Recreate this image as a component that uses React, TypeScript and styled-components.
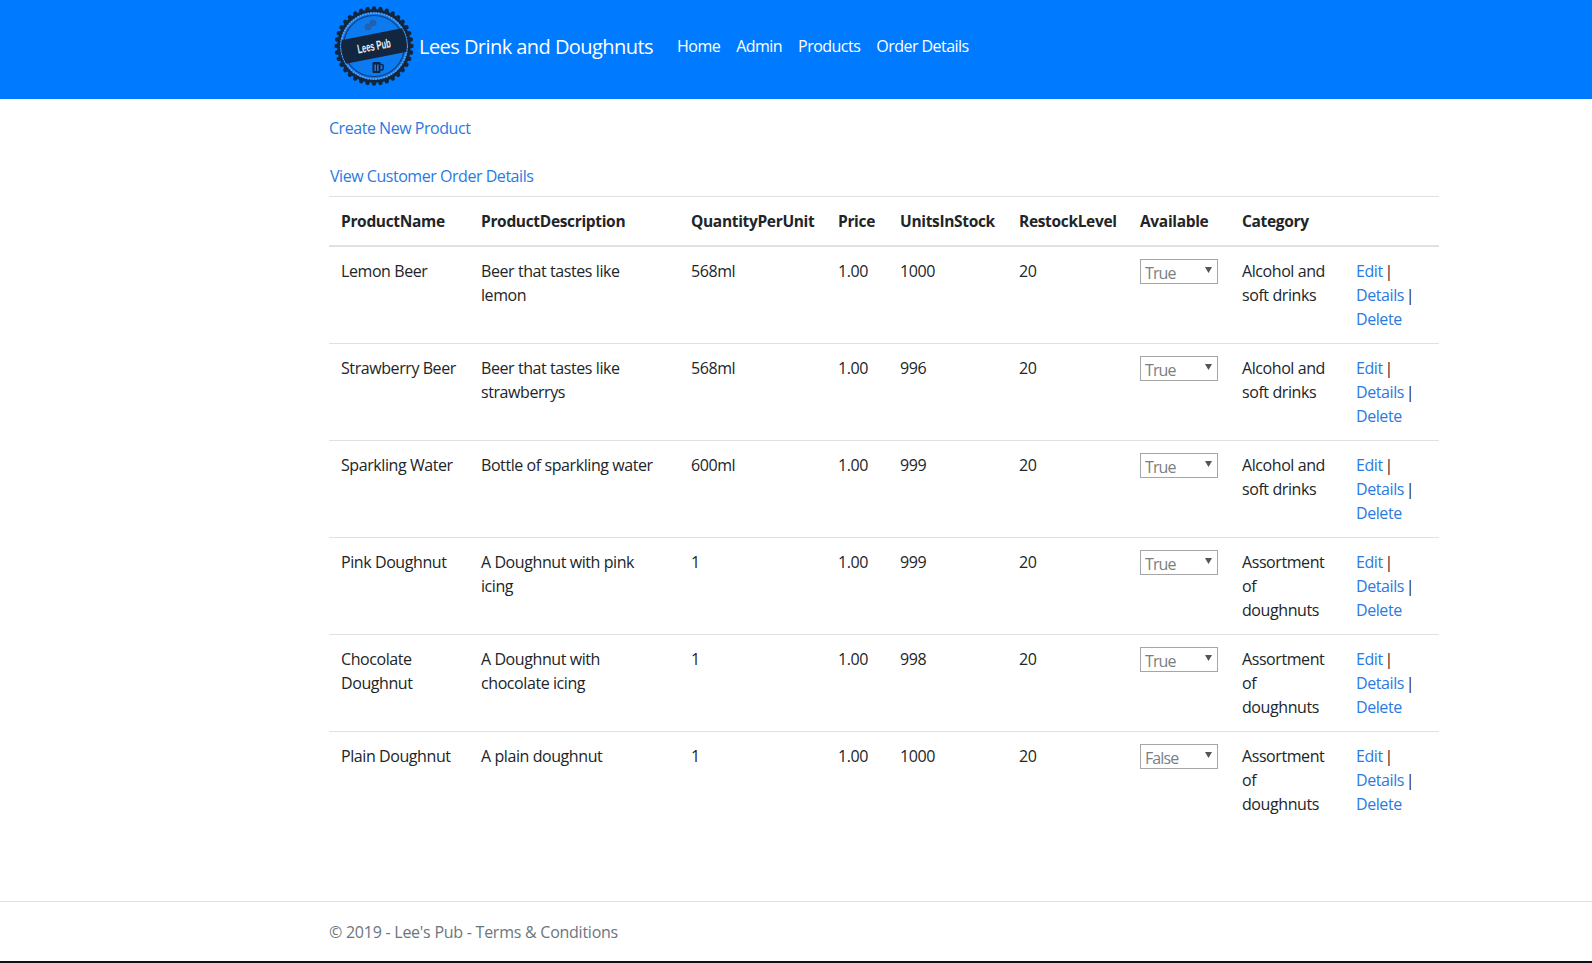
import React from "react";
import styled, { createGlobalStyle } from "styled-components";

const Global = createGlobalStyle`
  html, body { margin: 0; padding: 0; background: #fff; }
  body { font-family: "Open Sans", "Noto Sans", "Liberation Sans", sans-serif; font-size: 16px; line-height: 24px; color: #212529; }
  * { box-sizing: border-box; }
`;

const Page = styled.div`
  height: 963px;
  display: flex;
  flex-direction: column;
  border-bottom: 2px solid #111;
`;
const NavBar = styled.nav`
  height: 99px;
  flex: none;
  background: #007bff;
  padding-left: 333px;
  display: flex;
  align-items: flex-start;
`;
const Logo = styled.svg`
  width: 82px;
  height: 84px;
  margin-top: 4px;
  flex: none;
`;
const Brand = styled.a`
  color: #fff;
  font-size: 20px;
  line-height: 30px;
  margin: 32px 0 0 4px;
  letter-spacing: -0.55px;
`;
const NavLinks = styled.div`
  display: flex;
  gap: 16px;
  margin: 34px 0 0 24px;
`;
const NavLink = styled.a`
  color: #fff;
  font-size: 16px;
  line-height: 24px;
  letter-spacing: -0.53px;
`;
const Main = styled.main`
  flex: 1;
  padding: 0 152px 0 329px;
`;
const ActionLink = styled.a<{ $top: number; $left?: number }>`
  display: block;
  color: #2a7ae2;
  margin-top: ${(p) => p.$top}px;
  margin-left: ${(p) => p.$left ?? 0}px;
  letter-spacing: -0.46px;
`;
const Table = styled.table`
  width: 1110px;
  margin-top: 8px;
  border-collapse: collapse;
  table-layout: fixed;
`;
const Th = styled.th`
  text-align: left;
  font-weight: 700;
  padding: 12px;
  height: 49px;
  border-top: 1px solid #dee2e6;
  border-bottom: 2px solid #dee2e6;
  white-space: nowrap;
  letter-spacing: -0.33px;
  font-size: 15.5px;
`;
const Td = styled.td`
  vertical-align: top;
  padding: 12px;
  height: 97px;
  border-top: 1px solid #dee2e6;
  letter-spacing: -0.42px;
  tr:first-child > & { border-top: none; }
`;
const SelectWrap = styled.div`
  position: relative;
  width: 78px;
  height: 25px;
`;
const Select = styled.select`
  width: 100%;
  height: 100%;
  appearance: none;
  background: #fff;
  border: 1px solid #a6a6a6;
  border-radius: 0;
  color: #7a7f83;
  font: inherit;
  line-height: 23px;
  letter-spacing: -0.9px;
  padding: 2px 4px 0;
`;
const Caret = styled.svg`
  position: absolute;
  right: 6px;
  top: 7px;
  width: 7px;
  height: 7px;
  pointer-events: none;
`;
const RowLink = styled.a`
  color: #2a7ae2;
`;
const Separator = styled.span`
  margin-left: -2px;
`;
const Footer = styled.footer`
  height: 60px;
  flex: none;
  border-top: 1px solid #dee2e6;
  padding: 18px 0 0 329px;
  color: #6c757d;
  letter-spacing: -0.25px;
`;

const ALC = "Alcohol and soft drinks";
const AST = "Assortment of doughnuts";
const rows = [
  ["Lemon Beer", "Beer that tastes like lemon", "568ml", "1000", "True", ALC],
  ["Strawberry Beer", "Beer that tastes like strawberrys", "568ml", "996", "True", ALC],
  ["Sparkling Water", "Bottle of sparkling water", "600ml", "999", "True", ALC],
  ["Pink Doughnut", "A Doughnut with pink icing", "1", "999", "True", AST],
  ["Chocolate Doughnut", "A Doughnut with chocolate icing", "1", "998", "True", AST],
  ["Plain Doughnut", "A plain doughnut", "1", "1000", "False", AST],
];
const widths = [140, 210, 147, 62, 119, 121, 102, 114, 95];
const heads = ["ProductName", "ProductDescription", "QuantityPerUnit", "Price", "UnitsInStock", "RestockLevel", "Available", "Category", ""];

const teeth = Array.from({ length: 36 }, (_, i) => (i * 360) / 36);

function LogoMark() {
  return (
    <Logo viewBox="0 0 82 84">
      <defs>
        <clipPath id="logo-inner">
          <circle r={33} />
        </clipPath>
      </defs>
      <g transform="translate(41 42)">
        {teeth.map((a) => (
          <circle key={a} cx={0} cy={-37.5} r={2.2} fill="#12263f" transform={`rotate(${a})`} />
        ))}
        <circle r={37} fill="#12263f" />
        <circle r={33.5} fill="#0a76ea" />
        <circle r={33} fill="none" stroke="#4ea3f5" strokeWidth={1.8} strokeDasharray="2 0.7" />
        <circle r={30.5} fill="#0d7bf0" stroke="#0f3f80" strokeWidth={1.2} />
        <g fill="#1f63b0">
          <circle cx={-6} cy={-19} r={3.6} />
          <circle cx={-1} cy={-23} r={3.6} />
        </g>
        <g clipPath="url(#logo-inner)">
          <g transform="rotate(-11)">
            <rect x={-36} y={-12} width={72} height={24} fill="#12263f" />
          </g>
        </g>
        <g transform="rotate(-11) scale(0.66 1.1)">
          <text y={4} textAnchor="middle" fill="#e6eef6" fontFamily="'Liberation Sans',sans-serif" fontWeight={700} fontSize={11.5}>
            Lees Pub
          </text>
        </g>
        <g transform="translate(2.5 16)">
          <rect x={-4} y={0} width={8} height={11} rx={1.2} fill="#0a2348" />
          <rect x={-2} y={2.5} width={1.3} height={6.5} fill="#3d83d6" />
          <rect x={0.7} y={2.5} width={1.3} height={6.5} fill="#3d83d6" />
          <path d="M4 2.5h1.2a1.5 1.5 0 0 1 1.5 1.5v2.5a1.5 1.5 0 0 1-1.5 1.5H4" fill="none" stroke="#0a2348" strokeWidth={1.4} />
        </g>
      </g>
    </Logo>
  );
}

export default function App() {
  return (
    <Page>
      <Global />
      <NavBar>
        <LogoMark />
        <Brand>Lees Drink and Doughnuts</Brand>
        <NavLinks>
          <NavLink>Home</NavLink>
          <NavLink>Admin</NavLink>
          <NavLink>Products</NavLink>
          <NavLink>Order Details</NavLink>
        </NavLinks>
      </NavBar>
      <Main>
        <ActionLink $top={17}>Create New Product</ActionLink>
        <ActionLink $top={24} $left={1}>View Customer Order Details</ActionLink>
        <Table>
          <colgroup>
            {widths.map((w, i) => (
              <col key={i} style={{ width: w }} />
            ))}
          </colgroup>
          <thead>
            <tr>
              {heads.map((h, i) => (
                <Th key={i}>{h}</Th>
              ))}
            </tr>
          </thead>
          <tbody>
            {rows.map((r) => (
              <tr key={r[0]}>
                <Td>{r[0]}</Td>
                <Td>{r[1]}</Td>
                <Td>{r[2]}</Td>
                <Td>1.00</Td>
                <Td>{r[3]}</Td>
                <Td>20</Td>
                <Td>
                  <SelectWrap>
                    <Select defaultValue={r[4]}>
                      <option>True</option>
                      <option>False</option>
                    </Select>
                    <Caret viewBox="0 0 7 7">
                      <path d="M0 1h7L3.5 7z" fill="#555" />
                    </Caret>
                  </SelectWrap>
                </Td>
                <Td>{r[5]}</Td>
                <Td>
                  <RowLink>Edit</RowLink> <Separator>|</Separator> <RowLink>Details</RowLink> <Separator>|</Separator> <RowLink>Delete</RowLink>
                </Td>
              </tr>
            ))}
          </tbody>
        </Table>
      </Main>
      <Footer>© 2019 - Lee's Pub - Terms &amp; Conditions</Footer>
    </Page>
  );
}
